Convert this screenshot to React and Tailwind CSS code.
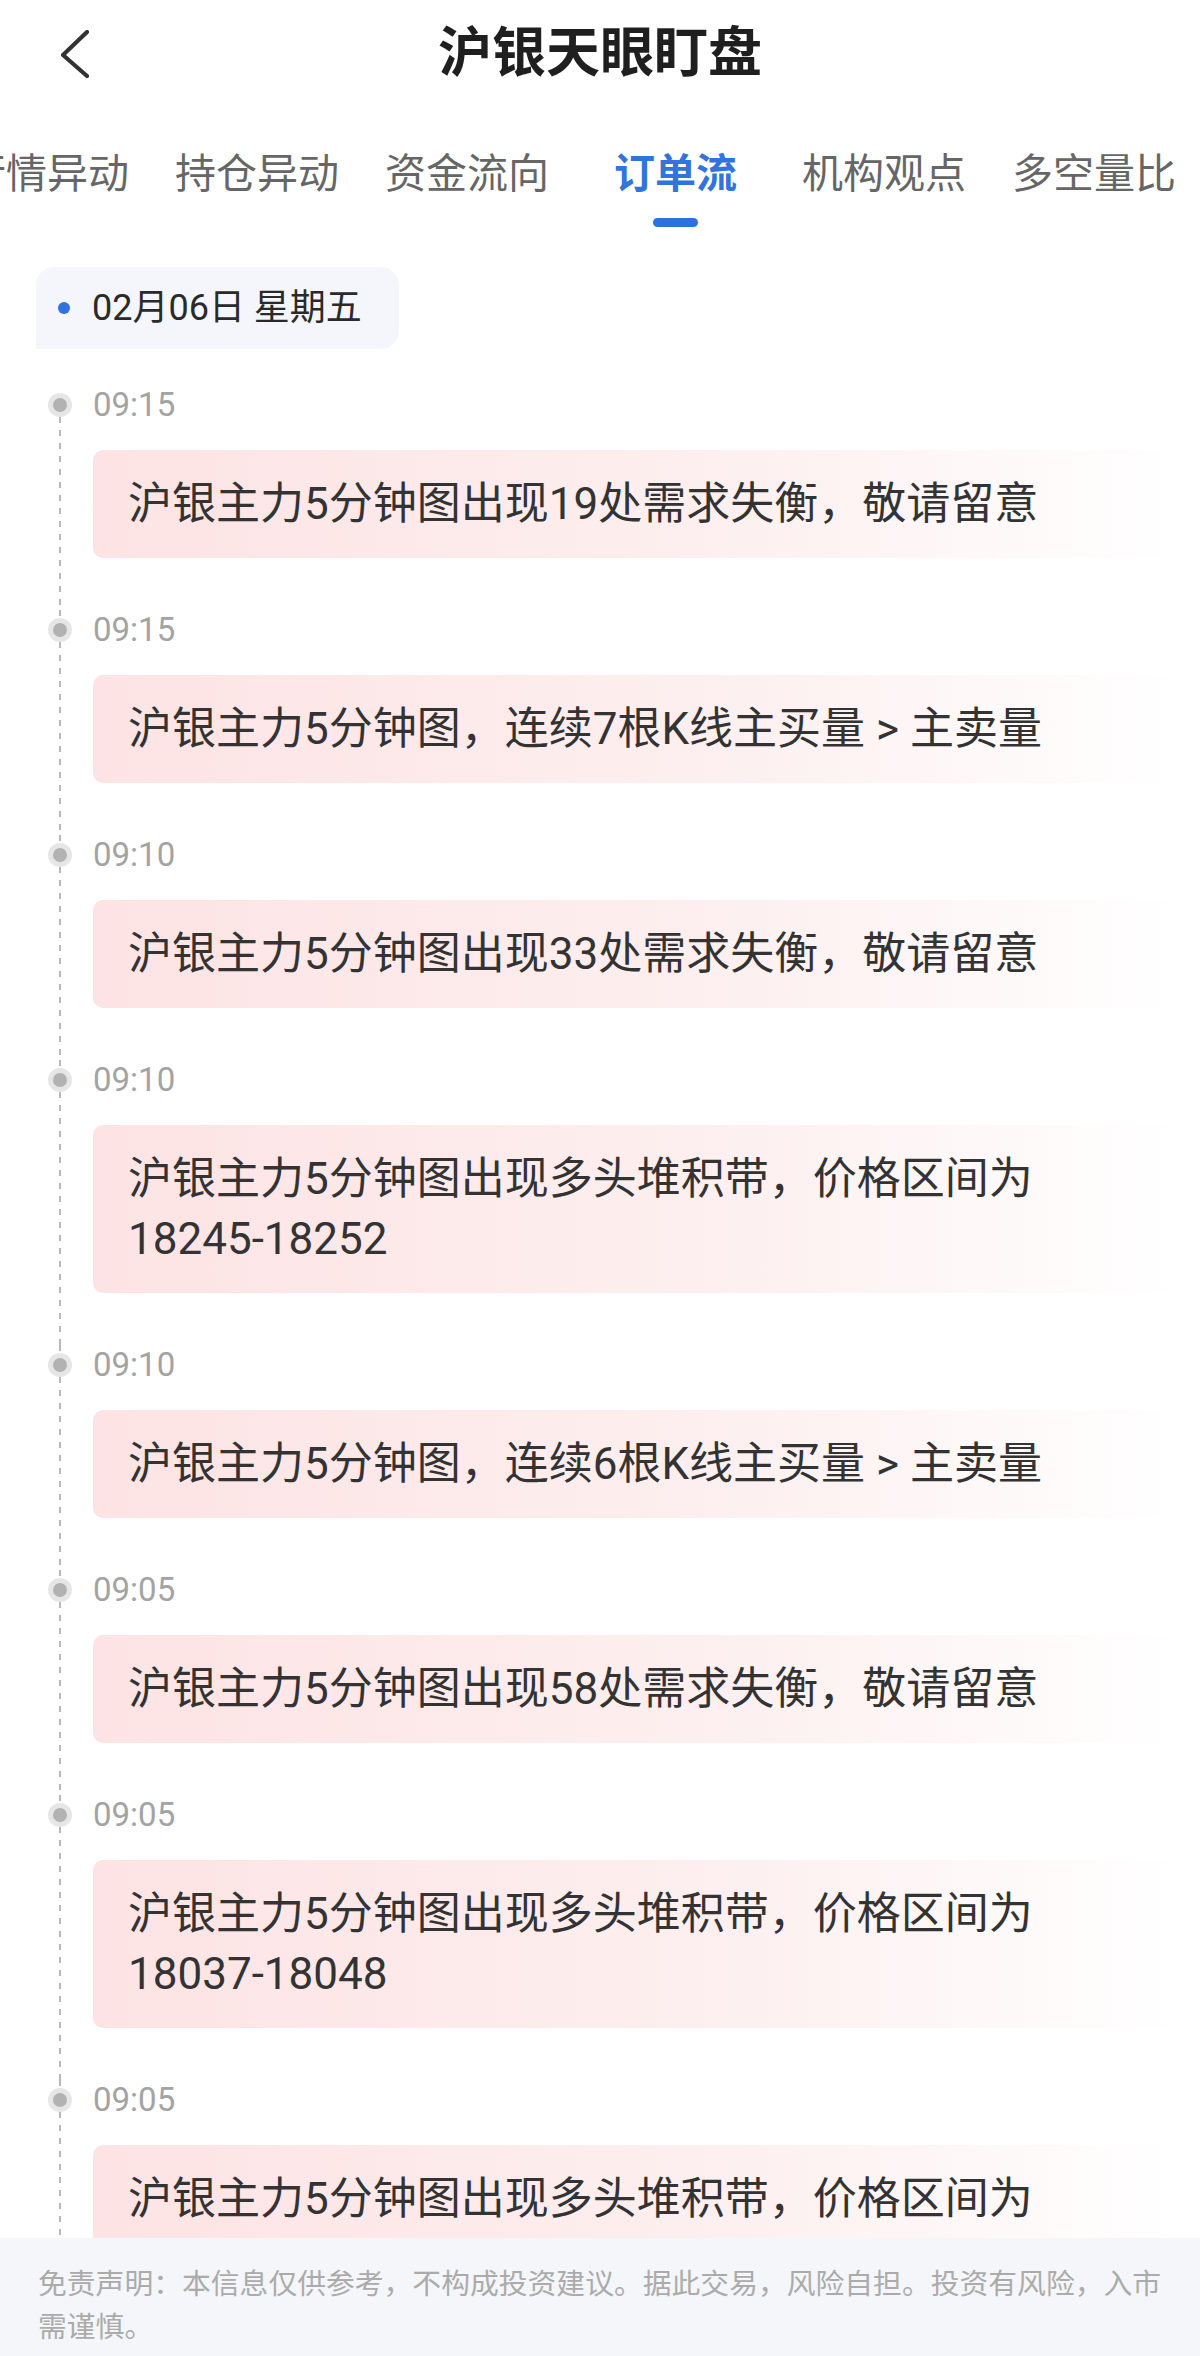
const tabs = ['行情异动', '持仓异动', '资金流向', '订单流', '机构观点', '多空量比'];
const activeTab = '订单流';

const items = [
  { time: '09:15', text: '沪银主力5分钟图出现19处需求失衡，敬请留意' },
  { time: '09:15', text: '沪银主力5分钟图，连续7根K线主买量 > 主卖量' },
  { time: '09:10', text: '沪银主力5分钟图出现33处需求失衡，敬请留意' },
  { time: '09:10', text: '沪银主力5分钟图出现多头堆积带，价格区间为18245-18252' },
  { time: '09:10', text: '沪银主力5分钟图，连续6根K线主买量 > 主卖量' },
  { time: '09:05', text: '沪银主力5分钟图出现58处需求失衡，敬请留意' },
  { time: '09:05', text: '沪银主力5分钟图出现多头堆积带，价格区间为18037-18048' },
  { time: '09:05', text: '沪银主力5分钟图出现多头堆积带，价格区间为' },
];

const dashed = 'w-[2px] bg-[repeating-linear-gradient(to_bottom,#b9b9b9_0_6px,transparent_6px_13px)]';

function TimelineItem({ time, text, first }) {
  return (
    <div className="flex">
      <div className="w-[24px] flex flex-col items-center shrink-0">
        <div className={first ? 'h-[8px]' : `h-[8px] ${dashed}`} />
        <div className="w-[24px] h-[24px] rounded-full bg-[#e6e6e6] flex items-center justify-center">
          <div className="w-[14px] h-[14px] rounded-full bg-[#b2b2b2]" />
        </div>
        <div className={`flex-1 ${dashed}`} />
      </div>
      <div className="flex-1 ml-[21px] pb-[52px]">
        <div className="h-[40px] flex items-center text-[33px] text-[#a3a3a3]">{time}</div>
        <div className="mt-[25px] rounded-[10px] bg-linear-to-r from-[#fde3e4] via-[#fdf0f0] via-60% to-white px-[35px] py-[24px] text-[44px] leading-[60px] text-[#333]">
          {text}
        </div>
      </div>
    </div>
  );
}

export default function App() {
  return (
    <div className="w-full h-[2356px] flex flex-col bg-white overflow-hidden font-['Roboto','Noto_Sans_CJK_SC',sans-serif]">
      <header className="h-[108px] shrink-0 grid grid-cols-[1fr_auto_1fr] items-center">
        <div className="pl-[61px] flex items-center">
          <svg width="28" height="48" viewBox="0 0 28 48" fill="none">
            <path d="M26 2 L2 25 L26 46" stroke="#333" strokeWidth="4.2" strokeLinecap="round" strokeLinejoin="round" />
          </svg>
        </div>
        <h1 className="text-[54px] font-bold text-[#1f1f1f] leading-none">沪银天眼盯盘</h1>
        <div />
      </header>

      <nav className="shrink-0 overflow-hidden pt-[40px]">
        <div className="flex items-start ml-[-35px] gap-[46px] w-max">
          {tabs.map((t) => {
            const active = t === activeTab;
            return (
              <div key={t} className={active ? 'flex flex-col items-center mx-[19px]' : 'flex flex-col items-center'}>
                <span className={active ? 'text-[41px] leading-[52px] font-bold text-[#3273dc]' : 'text-[41px] leading-[52px] text-[#666]'}>
                  {t}
                </span>
                {active && <div className="mt-[18px] w-[45px] h-[9px] rounded-full bg-[#2f71dc]" />}
              </div>
            );
          })}
        </div>
      </nav>

      <main className="flex-1 min-h-0 overflow-hidden">
        <div className="mt-[40px] ml-[36px] w-[363px] h-[82px] bg-[#f4f6fb] rounded-tl-[18px] rounded-r-[18px] flex items-center pl-[22px] gap-[22px]">
          <span className="w-[12px] h-[12px] rounded-full bg-[#2f72e0]" />
          <span className="text-[36px] text-[#2a2a2a]">02月06日 星期五</span>
        </div>

        <div className="mt-[36px] pl-[48px] pr-[17px]">
          {items.map((it, i) => (
            <TimelineItem key={i} time={it.time} text={it.text} first={i === 0} />
          ))}
        </div>
      </main>

      <footer className="h-[118px] shrink-0 bg-[#f5f6fa] pl-[38px] pr-[30px] pt-[25px] text-[28.8px] leading-[43px] text-[#ababab]">
        免责声明：本信息仅供参考，不构成投资建议。据此交易，风险自担。投资有风险，入市需谨慎。
      </footer>
    </div>
  );
}
